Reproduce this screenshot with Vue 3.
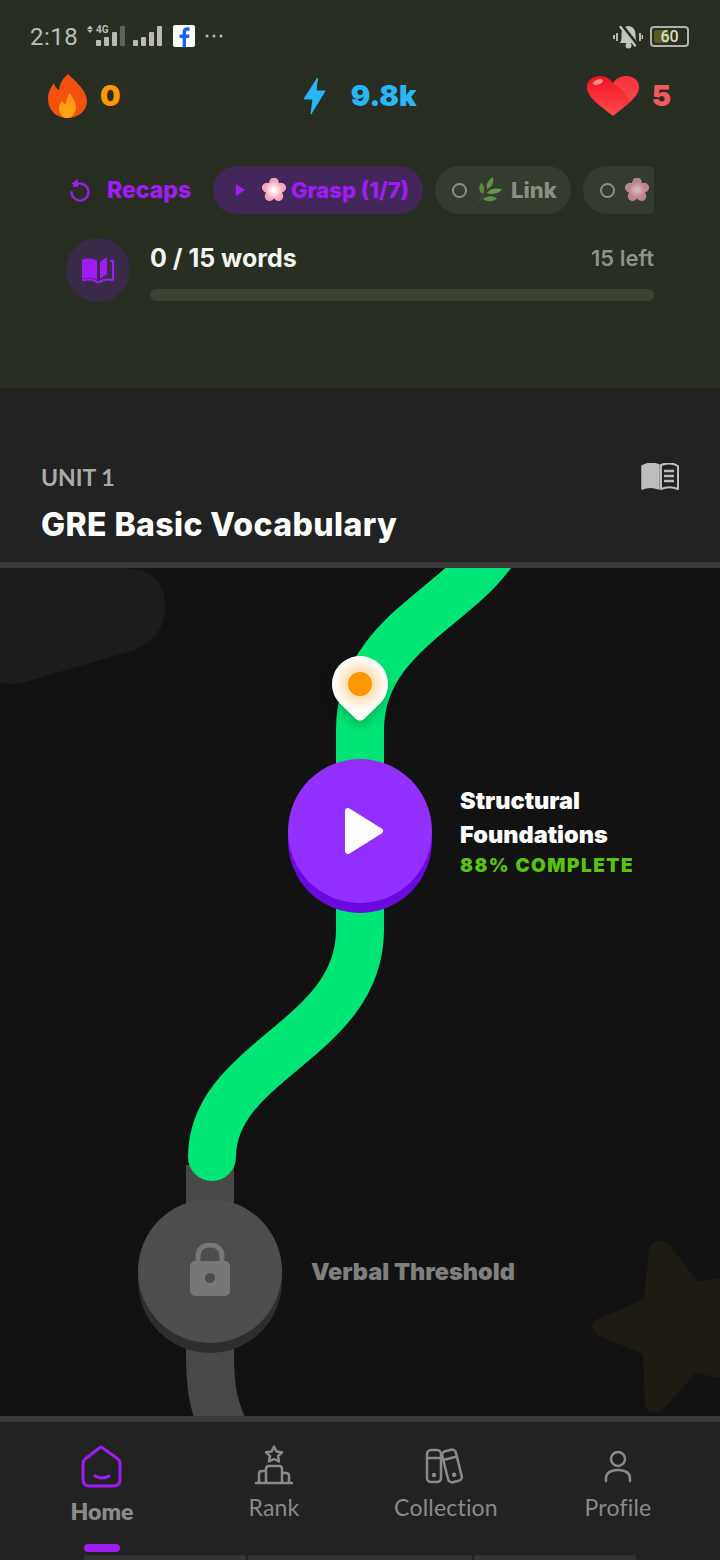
<script setup>
const navItems = [
  { label: 'Home', active: true },
  { label: 'Rank', active: false },
  { label: 'Collection', active: false },
  { label: 'Profile', active: false }
]
</script>

<template>
  <div class="screen">
    <header class="top">
      <div class="status">
        <span class="clock">2:18</span>
        <svg class="status__left" width="140" height="30" viewBox="0 0 140 30">
          <path d="M3 1.500 6 5H0zM3 9 0 5.800h6z" fill="#b9bbb4" transform="translate(0 1)" />
          <text x="9" y="10" class="status__4g">4G</text>
          <rect x="9" y="17" width="5" height="6" rx="1" fill="#b9bbb4" />
          <rect x="17" y="14" width="5" height="9" rx="1" fill="#b9bbb4" />
          <rect x="25" y="9" width="5" height="14" rx="1" fill="#b9bbb4" />
          <rect x="33" y="3" width="5" height="20" rx="1" fill="#5d6257" />
          <rect x="46" y="17" width="5" height="6" rx="1" fill="#b9bbb4" />
          <rect x="54" y="14" width="5" height="9" rx="1" fill="#b9bbb4" />
          <rect x="62" y="9" width="5" height="14" rx="1" fill="#b9bbb4" />
          <rect x="70" y="3" width="5" height="20" rx="1" fill="#b9bbb4" />
          <rect x="86" y="2" width="22" height="22" rx="2" fill="#fff" />
          <path d="M99 24v-9h3l.500-3.600H99V9.400c0-1 .400-1.700 1.800-1.700h1.800V4.500c-.600-.100-1.500-.200-2.500-.200-2.700 0-4.500 1.600-4.500 4.600v2.500h-3V15h3v9z" fill="#1565f5" />
          <circle cx="120" cy="13" r="1.500" fill="#b9bbb4" />
          <circle cx="127" cy="13" r="1.500" fill="#b9bbb4" />
          <circle cx="134" cy="13" r="1.500" fill="#b9bbb4" />
        </svg>
        <span class="status__gap"></span>
        <svg class="status__bell" width="30" height="24" viewBox="0 0 30 24">
          <path d="M7 18C9 15 8.500 12 8.500 9.500 8.500 4.500 11.500 1 15.500 1S22.500 4.500 22.500 9.500C22.500 12 22.500 15 24 18Z" fill="#c2c4bd" />
          <circle cx="15.500" cy="20.500" r="3" fill="#c2c4bd" />
          <path d="M9 1 24 20" stroke="#292e22" stroke-width="4" />
          <path d="M7.500 2 22 20.500" stroke="#c2c4bd" stroke-width="2.500" stroke-linecap="round" />
          <path d="M1 10v4M4 8v8M27 8v8M29.500 10v4" stroke="#c2c4bd" stroke-width="1.800" />
        </svg>
        <div class="battery">
          <span class="battery__fill"></span>
          <span class="battery__num">60</span>
        </div>
      </div>

      <div class="stats">
        <div class="stat">
          <svg width="39" height="44" viewBox="48 74 39 44">
            <defs>
              <linearGradient id="flameIn" x1="0" y1="0" x2="0" y2="1">
                <stop offset="0" stop-color="#ff8f1f" />
                <stop offset="1" stop-color="#ffa811" />
              </linearGradient>
            </defs>
            <path d="M68 74C74 80 87 90 87 101 87 111 78 118 67.500 118 57 118 48 111 48 99 48 92 51 87 54 83 55 87 57 89 59 90 60 83 63 78 68 74Z" fill="#f4510f" />
            <path d="M70 93C72 98 76 101 76 107 76 113 72 118 67 118 62 118 59 113 59 108 59 105 60 103 62 101 63 103 64 104 66 104 66 100 67 96 70 93Z" fill="url(#flameIn)" />
          </svg>
          <span class="stat__num stat__num--fire">0</span>
        </div>
        <div class="stat stat--mid">
          <svg width="22" height="36" viewBox="306 78 22 36">
            <path d="M319.500 78 306 99h9l-2 15 14-23h-9z" fill="#29b6f6" stroke="#29b6f6" stroke-linejoin="round" />
          </svg>
          <span class="stat__num stat__num--bolt">9.8k</span>
        </div>
        <div class="stat">
          <svg width="52" height="40" viewBox="589 76 52 40">
            <defs>
              <linearGradient id="heartFill" x1="0" y1="0" x2="0" y2="1">
                <stop offset="0" stop-color="#f2111f" />
                <stop offset="1" stop-color="#ff4c50" />
              </linearGradient>
            </defs>
            <path d="M615 116C600 104 589 97 589 87 589 80 595 76 602 76 608 76 612 79 615 83 618 79 622 76 628 76 635 76 641 80 641 87 641 97 630 104 615 116Z" fill="url(#heartFill)" />
            <path d="M615 83C618 79 622 76 628 76 635 76 641 80 641 87 641 92 637 97 632 101 628 93 622 88 615 83Z" fill="#ff5a5e" opacity=".45" />
            <ellipse cx="600" cy="82" rx="5" ry="2.500" fill="#ff8d92" transform="rotate(-20 600 82)" />
          </svg>
          <span class="stat__num stat__num--heart">5</span>
        </div>
      </div>

      <div class="tabs">
        <div class="tab-recap">
          <svg width="24" height="26" viewBox="0 0 24 26" fill="none" stroke="#a01cf5" stroke-width="2.200">
            <path d="M6 9a8.500 8.500 0 1 1-2.500 6" stroke-linecap="round" />
            <path d="M10 2v9L3.500 6.500z" fill="#a01cf5" stroke="none" />
          </svg>
          <span>Recaps</span>
        </div>
        <div class="pill pill--on">
          <span class="pill__play"></span>
          <svg class="flower" width="24" height="24" viewBox="-12 -12 24 24">
            <defs>
              <radialGradient id="blossom">
                <stop offset="0.1" stop-color="#fff" />
                <stop offset="1" stop-color="#fff" stop-opacity="0" />
              </radialGradient>
            </defs>
            <g fill="#f5a5b9">
              <ellipse cy="-6.500" rx="5" ry="6" />
              <ellipse cy="-6.500" rx="5" ry="6" transform="rotate(72)" />
              <ellipse cy="-6.500" rx="5" ry="6" transform="rotate(144)" />
              <ellipse cy="-6.500" rx="5" ry="6" transform="rotate(216)" />
              <ellipse cy="-6.500" rx="5" ry="6" transform="rotate(288)" />
            </g>
            <circle r="9" fill="url(#blossom)" />
          </svg>
          <span>Grasp (1/7)</span>
        </div>
        <div class="pill pill--link">
          <span class="pill__ring"></span>
          <svg width="26" height="26" viewBox="0 0 26 26">
            <path d="M3 25C7 18 10 14 14 9" stroke="#4b4a3a" stroke-width="1.200" fill="none" />
            <path d="M6 17C2 14 3 8 5.500 5.500 8.500 9 9.500 14 6 17Z" fill="#558a3f" />
            <path d="M11 12C9.500 7 13 2.500 17 0 18 5 16.500 10 11 12Z" fill="#5f9447" />
            <path d="M11 16C14 11.500 20 10.500 26 12.500 22.500 16.500 16 18.500 11 16Z" fill="#65994c" />
            <path d="M7 22C11 18.500 17 18.500 21 21.500 17 25 11 25 7 22Z" fill="#5a8f44" />
          </svg>
          <span>Link</span>
        </div>
        <div class="pill pill--cut">
          <span class="pill__ring"></span>
          <svg class="flower" width="24" height="24" viewBox="-12 -12 24 24">
            <g fill="#bb8590">
              <ellipse cy="-6.500" rx="5" ry="6" />
              <ellipse cy="-6.500" rx="5" ry="6" transform="rotate(72)" />
              <ellipse cy="-6.500" rx="5" ry="6" transform="rotate(144)" />
              <ellipse cy="-6.500" rx="5" ry="6" transform="rotate(216)" />
              <ellipse cy="-6.500" rx="5" ry="6" transform="rotate(288)" />
            </g>
            <circle r="8" fill="url(#blossom)" opacity=".45" />
          </svg>
        </div>
      </div>

      <div class="progress">
        <div class="progress__badge">
          <svg width="32" height="26" viewBox="0 0 32 26">
            <path d="M0 3C5 1 11 1 15 4V23C11 20.500 5 20.500 0 22Z" fill="#a01cf5" />
            <path d="M18 5 25 0V17L18 22Z" fill="#a01cf5" />
            <path d="M28 4H31V23C26 22 20 22.500 16 26 12.500 22.500 6 22 0 23.500" fill="none" stroke="#a01cf5" stroke-width="2" stroke-linejoin="round" />
          </svg>
        </div>
        <div class="progress__body">
          <div class="progress__row">
            <span class="progress__count">0 / 15 words</span>
            <span class="progress__left">15 left</span>
          </div>
          <div class="progress__bar"></div>
        </div>
      </div>
    </header>

    <section class="unit">
      <div class="unit__text">
        <div class="unit__eyebrow">UNIT 1</div>
        <div class="unit__title">GRE Basic Vocabulary</div>
      </div>
      <svg class="unit__icon" width="38" height="28" viewBox="0 0 38 28">
        <path d="M1 3C6 0 13 0 18 2V26C13 24 6 24 1 26Z" fill="#bdbdbd" stroke="#bdbdbd" stroke-width="1.500" stroke-linejoin="round" />
        <path d="M20 2C25 0 32 0 37 3V26C32 24 25 24 20 26Z" fill="none" stroke="#bdbdbd" stroke-width="2" stroke-linejoin="round" />
        <path d="M23 8H33M23 13H33M23 18H33" stroke="#bdbdbd" stroke-width="2.500" />
      </svg>
    </section>

    <main class="map">
      <svg class="map__art" width="720" height="848" viewBox="0 568 720 848">
        <path d="M0 568H125Q165 568 165 608 165 636 135 650L25 682Q10 686 0 682Z" fill="#1c1c1c" />
        <path d="M649 1250C652 1239 664 1238 671 1247L698 1282 730 1276V1380L696 1373 664 1408C656 1417 645 1414 645 1402L643 1354 600 1336C590 1331 590 1322 600 1318L644 1299Z" fill="#1e1c12" />
        <path d="M210 1165V1350C210 1385 212 1400 222 1425" fill="none" stroke="#484848" stroke-width="48" />
        <path d="M490 556C450 610 360 640 360 730V930C360 1040 212 1060 212 1157" fill="none" stroke="#00e676" stroke-width="48" stroke-linecap="round" />
      </svg>

      <div class="pin">
        <svg width="60" height="72" viewBox="330 655 60 72">
          <defs>
            <radialGradient id="pinGlow" gradientUnits="userSpaceOnUse" cx="360" cy="685" r="28">
              <stop offset="0.43" stop-color="#ffdcae" />
              <stop offset="0.8" stop-color="#fff7ec" />
              <stop offset="1" stop-color="#fff" />
            </radialGradient>
          </defs>
          <path d="M360 657A28 28 0 0 1 380 704.600L364 720Q360 723.500 356 720L340 704.600A28 28 0 0 1 360 657Z" fill="url(#pinGlow)" />
          <circle cx="360" cy="685" r="12" fill="#ff9800" />
        </svg>
      </div>

      <button class="node node--play">
        <svg width="40" height="48" viewBox="344 807 40 48">
          <path d="M348 811 380 831 348 851Z" fill="#fff" stroke="#fff" stroke-width="6" stroke-linejoin="round" />
        </svg>
      </button>
      <div class="node-label node-label--play">
        <div class="node-label__name">Structural<br />Foundations</div>
        <div class="node-label__done">88% COMPLETE</div>
      </div>

      <button class="node node--lock">
        <svg width="40" height="54" viewBox="0 0 40 54">
          <path d="M8 20V13C8 6 13 2 20 2S32 6 32 13V20" fill="none" stroke="#777" stroke-width="5" />
          <rect y="18" width="40" height="35" rx="5" fill="#777" />
          <circle cx="20" cy="35" r="5" fill="#4d4d4d" />
        </svg>
      </button>
      <div class="node-label node-label--lock">Verbal Threshold</div>
    </main>

    <nav class="nav">
      <div v-for="item in navItems" :key="item.label" class="nav__item" :class="{ 'nav__item--on': item.active }">
        <svg class="nav__icon" width="44" height="44" viewBox="0 0 44 44" fill="none" stroke="#8a8a8a" stroke-width="2.500" stroke-linecap="round" stroke-linejoin="round">
          <template v-if="item.label === 'Home'">
            <path d="M22 2.500 38 14Q40 16 40 19V34Q40 41 33 41H9Q3 41 3 34V19Q3 16 5 14L20 2.500Q21.500 1.500 22 2.500Z" stroke="#a01cf5" stroke-width="3" />
            <path d="M15 31Q22 35 29 31" stroke="#a01cf5" stroke-width="3" />
          </template>
          <template v-else-if="item.label === 'Rank'">
            <path d="M22 1.500 24.500 6.500 30 7.300 26 11 27 16.500 22 14 17 16.500 18 11 14 7.300 19.500 6.500Z" />
            <path d="M4 38H40M7 38V29Q7 26 10 26H14M14 38V24Q14 21 17 21H27Q30 21 30 24V38M30 28H34Q37 28 37 31V38" />
          </template>
          <template v-else-if="item.label === 'Collection'">
            <rect x="3" y="5" width="14" height="32" rx="4" />
            <path d="M3 13H17" />
            <circle cx="10" cy="30" r="1" fill="#8a8a8a" />
            <g transform="rotate(-14 28 21)">
              <rect x="21" y="5" width="14" height="32" rx="4" />
              <path d="M21 13H35" />
              <circle cx="28" cy="30" r="1" fill="#8a8a8a" />
            </g>
          </template>
          <template v-else>
            <circle cx="22" cy="14" r="7" />
            <path d="M10 36V34Q10 25 22 25 34 25 34 34V36" />
          </template>
        </svg>
        <span class="nav__label">{{ item.label }}</span>
        <span v-if="item.active" class="nav__dash"></span>
      </div>
      <div class="nav__strip">
        <span style="width: 162px"></span>
        <span style="width: 224px"></span>
        <span style="width: 162px"></span>
      </div>
    </nav>
  </div>
</template>

<style>
html, body {
  margin: 0;
  background: #222;
}
</style>

<style scoped>
.screen {
  width: 720px;
  height: 1560px;
  overflow: hidden;
  display: flex;
  flex-direction: column;
  font-family: Inter, "Liberation Sans", sans-serif;
  background: #222;
}

.top {
  height: 388px;
  box-sizing: border-box;
  background: #292e22;
  flex: none;
}

.status {
  height: 74px;
  display: flex;
  align-items: center;
  padding: 0 30px;
  box-sizing: border-box;
  color: #bcbeb7;
}

.clock {
  font-family: Roboto, sans-serif;
  font-size: 24px;
  letter-spacing: 0.5px;
  width: 57px;
}

.status__left {
  margin-top: 2px;
  flex: none;
}

.status__4g {
  font-family: Roboto, sans-serif;
  font-size: 10px;
  font-weight: 700;
  fill: #b9bbb4;
}

.status__gap {
  flex: 1;
}

.status__bell {
  margin-top: -1px;
}

.battery {
  position: relative;
  width: 39px;
  height: 21px;
  margin: -2px 1px 0 7px;
  box-sizing: border-box;
  border: 2px solid #b0b2ab;
  border-radius: 4px;
  display: flex;
  align-items: center;
  justify-content: center;
}

.battery__fill {
  position: absolute;
  left: 2px;
  top: 2px;
  bottom: 2px;
  width: 15px;
  background: #5b5a22;
  border-radius: 2px;
}

.battery__num {
  position: relative;
  font-family: Roboto, sans-serif;
  font-size: 16px;
  font-weight: 500;
  color: #dcdcc0;
}

.stats {
  height: 44px;
  padding: 0 49px 0 48px;
  display: flex;
  justify-content: space-between;
  align-items: center;
}

.stat {
  display: flex;
  align-items: center;
  gap: 13px;
}

.stat--mid {
  gap: 25px;
  margin-left: 13px;
}

.stat__num {
  font-size: 29px;
  font-weight: 900;
  line-height: 44px;
}

.stat__num--fire {
  color: #ff9800;
}

.stat__num--bolt {
  color: #29b6f6;
}

.stat__num--heart {
  color: #f55a5a;
}

.tabs {
  margin: 48px 66px 0;
  height: 48px;
  display: flex;
  align-items: center;
  gap: 12px;
  overflow: hidden;
  font-size: 22px;
  font-weight: 800;
  white-space: nowrap;
  color: #a01cf5;
}

.tab-recap {
  display: flex;
  align-items: center;
  gap: 15px;
  width: 124px;
  margin-left: 2px;
  margin-right: 9px;
  font-size: 23px;
  flex: none;
}

.pill {
  height: 48px;
  box-sizing: border-box;
  padding: 0 16px 0 17px;
  border-radius: 24px;
  background: #353b2f;
  color: #8a8f84;
  display: flex;
  align-items: center;
  gap: 9px;
  flex: none;
}

.pill--on {
  background: #44275a;
  color: #a01cf5;
  padding-left: 23px;
  width: 210px;
  gap: 0;
}

.pill--link {
  padding-right: 14px;
}

.pill--cut {
  gap: 10px;
}

.pill__play {
  width: 0;
  height: 0;
  border-left: 9px solid #a01cf5;
  border-top: 6px solid transparent;
  border-bottom: 6px solid transparent;
  margin-right: 17px;
}

.flower {
  margin-right: 5px;
  flex: none;
}

.pill__ring {
  width: 15px;
  height: 15px;
  box-sizing: border-box;
  border: 2px solid #8a8f84;
  border-radius: 50%;
}

.progress {
  margin: 24px 66px 0;
  display: flex;
  gap: 20px;
}

.progress__badge {
  width: 64px;
  height: 64px;
  border-radius: 50%;
  background: #3a2b49;
  display: flex;
  align-items: center;
  justify-content: center;
  flex: none;
}

.progress__body {
  flex: 1;
}

.progress__row {
  height: 40px;
  display: flex;
  justify-content: space-between;
  align-items: center;
}

.progress__count {
  font-size: 25px;
  font-weight: 700;
  color: #f4f4f4;
}

.progress__left {
  font-size: 22px;
  font-weight: 600;
  color: #8e938a;
}

.progress__bar {
  margin-top: 11px;
  height: 12px;
  border-radius: 6px;
  background: #3b4234;
}

.unit {
  height: 174px;
  flex: none;
  box-sizing: border-box;
  padding: 74px 41px 0;
  display: flex;
  justify-content: space-between;
  background: #222;
}

.unit__eyebrow {
  font-family: Lato, sans-serif;
  font-size: 23px;
  line-height: 30px;
  color: #aaa;
  font-weight: 700;
}

.unit__title {
  margin-top: 13px;
  font-size: 32px;
  letter-spacing: 0.4px;
  line-height: 40px;
  font-weight: 800;
  color: #fff;
}

.unit__icon {
  margin-top: 1px;
}

.map {
  position: relative;
  height: 848px;
  flex: none;
  overflow: hidden;
  background: #121212;
  border-top: 6px solid #3a3a3a;
  border-bottom: 6px solid #3a3a3a;
}

.map__art {
  position: absolute;
  left: 0;
  top: 0;
}

.pin {
  position: absolute;
  left: 330px;
  top: 86px;
  width: 60px;
  height: 72px;
  filter: drop-shadow(0 6px 6px rgba(0, 0, 0, 0.22));
}

.node {
  position: absolute;
  width: 144px;
  height: 144px;
  padding: 0;
  border: 0;
  border-radius: 50%;
  display: flex;
  align-items: center;
  justify-content: center;
}

.node--play {
  left: 288px;
  top: 191px;
  background: #9430ff;
  box-shadow: 0 10px 0 #6a0ae0;
}

.node--play svg {
  margin-left: 8px;
}

.node--lock {
  left: 138px;
  top: 631px;
  background: #4d4d4d;
  box-shadow: 0 10px 0 #2e2e2e;
}

.node--lock svg {
  margin-top: -2px;
}

.node-label {
  position: absolute;
  left: 460px;
  font-size: 23.5px;
  font-weight: 900;
  color: #fff;
  line-height: 34px;
}

.node-label--play {
  top: 216px;
}

.node-label--lock {
  left: 311px;
  top: 687px;
  color: #7f7f7f;
}

.node-label__done {
  font-size: 19px;
  line-height: 28px;
  letter-spacing: 1.5px;
  color: #58c411;
}

.nav {
  position: relative;
  flex: 1;
  padding: 23px 16px 0;
  display: flex;
  background: #222;
}

.nav__item {
  width: 172px;
  display: flex;
  flex-direction: column;
  align-items: center;
  color: #8a8a8a;
  font-family: Lato, sans-serif;
  font-size: 23px;
  letter-spacing: 0.2px;
}

.nav__label {
  margin-top: 5px;
  line-height: 26px;
}

.nav__item--on .nav__label {
  margin-top: 9px;
  font-weight: 800;
  letter-spacing: 0;
}

.nav__dash {
  margin-top: 20px;
  width: 36px;
  height: 8px;
  border-radius: 4px;
  background: #a01cf5;
}

.nav__strip {
  position: absolute;
  left: 84px;
  bottom: 0;
  display: flex;
  gap: 2px;
}

.nav__strip span {
  height: 5px;
  border-radius: 3px 3px 0 0;
  background: #333;
}
</style>
